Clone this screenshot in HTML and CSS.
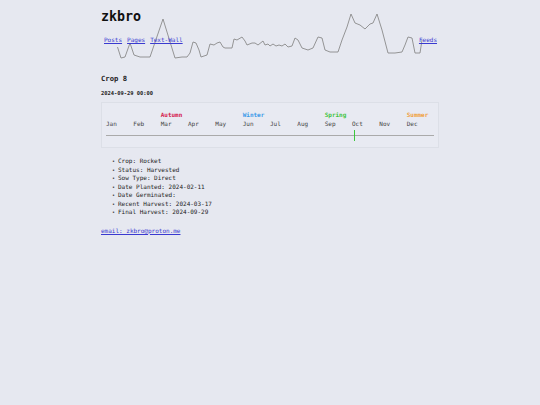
FILE: index.html
```html
<!DOCTYPE html>
<html lang="en">
<head>
<meta charset="utf-8">
<title>Crop 8 - zkbro</title>
<link rel="stylesheet" href="styles.css">
</head>
<body>
<div class="page">
  <header class="site-header">
    <svg class="spark" viewBox="101 0 338 60" width="338" height="60" aria-hidden="true">
      <polyline fill="none" stroke="#8a8a8a" stroke-width="0.9" stroke-linejoin="round" points="117.5,47 121,58 125,57 130,43 134,55 140,57 150,57 163,19 175,58 182,57 187,57 190,53 193,42 196,43 199,50 201,57 207,55 210,44 214,45 217,43 220,42 223,47 225,48 232,48 234,39 237,40 242,37 245,41 247,45 252,43 255,43 258,45 263,41 265,45 268,44 270,46 273,44 276,46 279,45 282,46 285,44 288,47 292,46 295,38 298,40 302,48 308,50 313,48 318,37 322,38 325,50 330,52 338,52 342,40 347,27 351,14 355,23 360,25 365,29 370,24 373,23 377,14 382,30 388,53 395,53 402,52 405,45 408,37 412,38 415,53 420,53 422,40"/>
    </svg>
    <h1 class="site-title">zkbro</h1>
    <nav class="nav">
      <a href="#">Posts</a>
      <a href="#">Pages</a>
      <a href="#">Text-Wall</a>
      <span class="spacer"></span>
      <a href="#">Feeds</a>
    </nav>
  </header>

  <main>
    <h2 class="post-title">Crop 8</h2>
    <div class="post-date">2024-09-29 00:00</div>

    <div class="timeline">
      <div class="row seasons">
        <span></span><span></span><span class="autumn">Autumn</span>
        <span></span><span></span><span class="winter">Winter</span>
        <span></span><span></span><span class="spring">Spring</span>
        <span></span><span></span><span class="summer">Summer</span>
      </div>
      <div class="row months">
        <span>Jan</span><span>Feb</span><span>Mar</span><span>Apr</span>
        <span>May</span><span>Jun</span><span>Jul</span><span>Aug</span>
        <span>Sep</span><span>Oct</span><span>Nov</span><span>Dec</span>
      </div>
      <div class="track">
        <div class="track-line"></div>
        <div class="marker" style="left: 75.6%"></div>
      </div>
    </div>

    <ul class="details">
      <li>Crop: Rocket</li>
      <li>Status: Harvested</li>
      <li>Sow Type: Direct</li>
      <li>Date Planted: 2024-02-11</li>
      <li>Date Germinated:</li>
      <li>Recent Harvest: 2024-03-17</li>
      <li>Final Harvest: 2024-09-29</li>
    </ul>
  </main>

  <footer class="footer">
    <a href="#">email: zkbro@proton.me</a>
  </footer>
</div>
</body>
</html>
```

FILE: styles.css
```css
html, body {
  margin: 0;
  padding: 0;
  background: #e6e8f0;
}

body {
  font-family: "DejaVu Sans Mono", "Liberation Mono", monospace;
  color: #222;
  font-size: 6px;
}

a {
  color: #3a3ad0;
}

.page {
  width: 338px;
  margin: 0 auto;
}

.site-header {
  position: relative;
  height: 44px;
}

.spark {
  position: absolute;
  left: 0;
  top: 0;
}

.site-title {
  position: relative;
  margin: 0;
  padding-top: 9px;
  font-size: 13.3px;
  line-height: 16px;
  font-weight: bold;
  color: #111;
}

.nav {
  position: relative;
  display: flex;
  gap: 5px;
  margin-top: 11px;
  padding: 0 2px 0 3px;
  font-size: 6px;
  line-height: 8px;
}

.spacer {
  flex: 1;
}

.post-title {
  margin: 30px 0 0;
  font-size: 7.2px;
  line-height: 9px;
  font-weight: bold;
}

.post-date {
  margin-top: 7px;
  font-size: 5.4px;
  line-height: 7px;
  font-weight: bold;
}

.timeline {
  margin-top: 5px;
  border: 1px solid #dcdfe7;
  background: #e8eaf2;
  padding: 7px 4px 7px 4px;
}

.row {
  display: grid;
  grid-template-columns: repeat(12, 1fr);
  line-height: 9px;
  font-size: 6px;
}

.seasons span {
  font-weight: bold;
}

.months {
  color: #444;
}

.autumn { color: #d4204e; }
.winter { color: #3d9be9; }
.spring { color: #3fc43f; }
.summer { color: #f0a040; }

.track {
  position: relative;
  box-sizing: border-box;
  height: 11px;
  margin-top: 1px;
  padding-top: 6px;
}

.track-line {
  height: 1px;
  background: #aaaaaa;
}

.marker {
  position: absolute;
  top: 1px;
  width: 1.5px;
  height: 11px;
  background: #3cc83c;
}

.details {
  list-style: none;
  margin: 9px 0 0;
  padding-left: 11px;
  font-size: 6px;
  line-height: 8.5px;
}

.details li::before {
  content: "\2022";
  display: inline-block;
  width: 6px;
  font-size: 5px;
}

.footer {
  margin-top: 10px;
  font-size: 6px;
  line-height: 8px;
}
```
